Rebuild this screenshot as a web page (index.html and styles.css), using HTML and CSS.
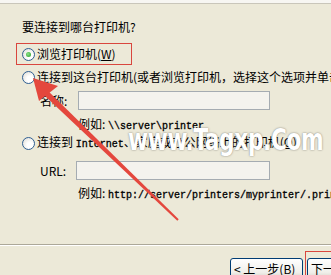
FILE: index.html
```html
<!DOCTYPE html>
<html>
<head>
<meta charset="utf-8">
<link rel="stylesheet" href="styles.css">
</head>
<body>
<div class="page">
  <div class="top"></div>
  <div class="title">要连接到哪台打印机?</div>
  <div class="opt1">
    <span class="radio on"></span><span class="lbl">浏览打印机(<u>W</u>)</span>
  </div>
  <div class="opt">
    <span class="radio"></span><span class="lbl">连接到这台打印机(或者浏览打印机，选择这个选项并单击“下一步”)(<u>C</u>):</span>
  </div>
  <div class="field">
    <span class="flabel">名称:</span><span class="input"></span>
  </div>
  <div class="example">例如: <span class="mono">\\server\printer</span></div>
  <div class="opt opt3">
    <span class="radio"></span><span class="lbl">连接到 <span class="mono">Internet</span>、家庭或办公网络上的打印机(<u>O</u>):</span>
  </div>
  <div class="field url">
    <span class="flabel">URL:</span><span class="input"></span>
  </div>
  <div class="example ex2">例如: <span class="mono">http://server/printers/myprinter/.printer</span></div>
  <div class="sep"></div>
  <div class="buttons">
    <button class="btn">&lt; 上一步(<u>B</u>)</button>
    <button class="btn">下一步(<u>N</u>) &gt;</button>
  </div>
</div>
<div class="mark">www.Tagxp.Com</div>
<div class="redbox"></div>
<svg class="arrow" width="331" height="275" viewBox="0 0 331 275">
  <polygon points="47.1,89.9 178.7,219.3 177.3,220.7 42.9,94.1" fill="#e4473d"/>
  <polygon points="33,78 39,101 58,86" fill="#e4473d"/>
</svg>
</body>
</html>
```
FILE: styles.css
```css
html, body {
  margin: 0;
  padding: 0;
}
body {
  width: 331px;
  height: 275px;
  overflow: hidden;
  position: relative;
  background: #ECE9D8;
  font-family: "Noto Sans CJK SC", "DejaVu Sans", sans-serif;
  font-size: 12px;
  color: #000;
}
.page {
  display: flex;
  flex-direction: column;
  white-space: nowrap;
}
.top {
  height: 3px;
  background: #F7F6F2;
  border-bottom: 1px solid #C9C6BA;
}
.title {
  margin: 15px 0 0 22px;
  height: 16px;
  line-height: 16px;
}
.opt1 {
  margin: 8px 0 0 16px;
  height: 20px;
  border: 1px solid #D9463E;
  display: flex;
  align-items: center;
  padding-left: 5px;
  box-sizing: content-box;
  width: 109px;
}
.opt {
  margin: 4px 0 0 22px;
  height: 16px;
  display: flex;
  align-items: center;
}
.opt3 {
  margin-top: 3px;
}
.lbl {
  margin-left: 2px;
  line-height: 16px;
}
.radio {
  width: 11px;
  height: 11px;
  border-radius: 50%;
  border: 1px solid #2F5F93;
  background: radial-gradient(circle at 65% 65%, #FFFFFF 30%, #DCD9D0 100%);
  flex: none;
  position: relative;
}
.radio.on::after {
  content: "";
  position: absolute;
  left: 3px;
  top: 3px;
  width: 5px;
  height: 5px;
  border-radius: 50%;
  background: radial-gradient(circle at 40% 40%, #8EE28A, #1F9A1F);
}
.field {
  margin: 6px 0 0 40px;
  height: 19px;
  display: flex;
  align-items: center;
}
.flabel {
  width: 38px;
}
.input {
  width: 190px;
  height: 17px;
  border: 1px solid #A5ACB2;
  background: #F4F3EE;
}
.url {
  margin-top: 10px;
}
.url .flabel {
  width: 36px;
}
.url .input {
  width: 192px;
}
.example {
  margin: 6px 0 0 78px;
  height: 16px;
  line-height: 16px;
}
.ex2 {
  margin-top: 5px;
}
.mono {
  font-family: "Liberation Mono", monospace;
  font-size: 10px;
  -webkit-text-stroke: 0.3px #000;
}
.sep {
  margin-top: 43px;
  border-top: 1px solid #ACA899;
  border-bottom: 1px solid #FFFFFF;
}
.buttons {
  display: flex;
  gap: 4px;
  margin: 12px 0 0 230px;
}
.btn {
  flex: none;
  width: 73px;
  height: 21px;
  padding: 0;
  border: 1px solid #003C74;
  border-radius: 3px;
  background: linear-gradient(#FFFFFF, #F0EFEA 70%, #D8D5CA);
  font-family: "Noto Sans CJK SC", "DejaVu Sans", sans-serif;
  font-size: 12px;
  color: #000;
  text-align: left;
  padding-left: 3px;
  line-height: 17px;
  white-space: nowrap;
}
.mark {
  position: absolute;
  left: 128px;
  top: 121px;
  font-family: "DejaVu Sans Condensed", "DejaVu Sans", sans-serif;
  font-weight: bold;
  font-size: 31px;
  color: #FFFFFF;
  text-shadow: 0 0 2px rgba(60, 60, 60, 0.7);
  letter-spacing: -0.5px;
  transform: scaleX(0.78);
  transform-origin: left top;
  white-space: nowrap;
}
.redbox {
  position: absolute;
  left: 305px;
  top: 251px;
  width: 40px;
  height: 30px;
  border: 1px solid #D9463E;
}
.arrow {
  position: absolute;
  left: 0;
  top: 0;
  pointer-events: none;
}
```
